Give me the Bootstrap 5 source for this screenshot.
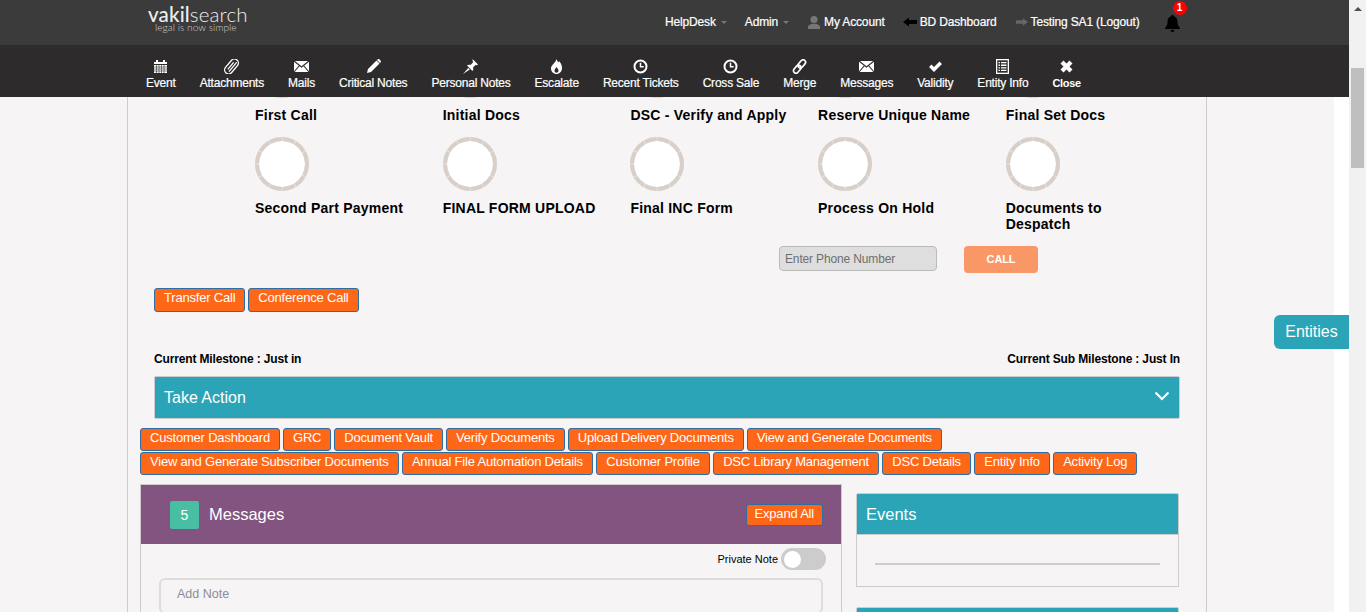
<!DOCTYPE html>
<html lang="en">
<head>
    <meta charset="UTF-8">
    <meta name="viewport" content="width=device-width, initial-scale=1.0">
    <title>Vakilsearch Ticket</title>
    <link href="https://cdn.jsdelivr.net/npm/bootstrap@5.3.0/dist/css/bootstrap.min.css" rel="stylesheet">
    <style>
        html, body { height: 612px; overflow: hidden; }
        body { font-family: "Liberation Sans", Arial, sans-serif; background: #fff; color: #000; font-size: 12px; }
        .screen { height: 612px; }
        .page { width: 1349px; height: 612px; overflow: hidden; position: relative; }

        /* fake browser scrollbar */
        .scroll-rail { width: 17px; background: #f1f1f1; padding-top: 7px; }
        .scroll-arrow { width: 0; height: 0; margin: 0 auto; border: 4px solid transparent; border-top: 0; border-bottom: 4px solid #505050; }
        .scroll-thumb { width: 13px; height: 100px; margin: 57px auto 0; background: #bfbfbf; }

        /* header */
        .top-head { position: relative; z-index: 5; }
        .top-bar { height: 45px; background: #3b3b3b; padding-left: 148px; color: #fff; }
        .logo-box { width: 100px; padding-top: 5px; color: #eee; line-height: 1; }
        .logo-word { font-family: Lato, sans-serif; font-size: 20.5px; font-weight: 300; letter-spacing: .15px; line-height: 18px; }
        .logo-word b { font-weight: 500; }
        .logo-tag { font-family: Lato, sans-serif; font-size: 10.2px; font-weight: 300; color: #ccc; margin-left: 7px; line-height: 9px; }
        .top-links { position: absolute; top: 0; left: 665px; height: 43px; white-space: nowrap; }
        .top-link { color: #fff; text-decoration: none; font-size: 12px; letter-spacing: -.15px; -webkit-text-stroke: .2px #fff; }
        .top-link.has-caret { margin-right: 18px; }
        .top-link.has-icon { margin-right: 18px; }
        .top-link.wide-gap { margin-right: 19px; }
        .mini-caret { display: inline-block; width: 0; height: 0; margin-left: 5px; vertical-align: middle; border: 3px solid transparent; border-top: 3px solid #777; border-bottom: 0; }
        .top-ico { width: 14px; height: 14px; margin-right: 3px; vertical-align: -3px; }
        .bell-wrap { position: relative; width: 17px; height: 17px; margin-top: 2px; }
        .bell-count { position: absolute; top: -13px; left: 9px; width: 14px; height: 14px; border-radius: 50%; background: #f00; color: #fff; font-size: 10px; font-weight: 700; line-height: 14px; text-align: center; }
        .tool-bar { height: 52px; background: #2d2b2c; padding: 14px 0 0 146px; gap: 24px; }
        .tool-item { color: #fff; text-decoration: none; font-size: 12px; line-height: 14px; letter-spacing: -.21px; text-align: center; -webkit-text-stroke: .2px #fff; white-space: nowrap; }
        .tool-item svg { display: block; width: 15px; height: 15px; margin: 0 auto 2px; }
        .tool-item.tool-small { font-size: 11px; font-weight: 700; letter-spacing: -.3px; -webkit-text-stroke: 0; }

        /* body */
        .page-body { background: #fff; padding-right: 15px; height: 515px; }
        .page-inner { background: #f6f4f5; height: 515px; padding-left: 127px; }
        .main-frame { display: flow-root; width: 1080px; height: 515px; border-left: 1px solid #ccc; border-right: 1px solid #ccc; }

        .stage-grid { display: grid; grid-template-columns: repeat(5, 187.7px); row-gap: 14px; margin: -53px 0 0 127px; }
        .stage-ring { display: block; width: 54px; height: 54px; }
        .stage-name { font-size: 14px; font-weight: 700; letter-spacing: .22px; line-height: 16px; margin-top: 9px; min-height: 16px; white-space: nowrap; }
        .stage-name.wrap-name { width: 130px; white-space: normal; }

        .call-row { padding-right: 168px; margin-top: 14px; gap: 27px; height: 27px; }
        .phone-input { width: 158px; height: 25px; min-height: 0; padding: 0 5px; font-size: 12px; letter-spacing: -.15px; background: #dedede; border: 1px solid #bbb; border-radius: 4px; }
        .phone-input::placeholder { color: #6f6f6f; }
        .call-btn { width: 74px; height: 27px; padding: 0; background: #fa9767; border: 0; border-radius: 4px; color: #fff; font-size: 11px; font-weight: 700; letter-spacing: -.1px; }
        .call-btn:hover { background: #fa9767; color: #fff; }

        .act-btn { background: #fd6717; border: 1px solid #2f6da5; border-radius: 3px; color: #fff; font-size: 13px; line-height: 15px; letter-spacing: -.2px; padding: 1px 9px 6px; white-space: nowrap; }
        .act-btn:hover { background: #fd6717; color: #fff; border-color: #2f6da5; }
        .transfer-row { padding-left: 26px; margin-top: 15px; gap: 3px; }
        .milestone-row { margin: 40px 26px 0; font-size: 12px; font-weight: 700; line-height: 14px; letter-spacing: -.15px; }
        .take-bar { margin: 10px 26px 0; height: 43px; background: #2ca4b7; border: 1px solid #ccc; border-radius: 2px; color: #fff; font-size: 16px; padding: 0 9px; }
        .take-bar svg { width: 16px; height: 10px; margin-top: -4px; }
        .act-rows { padding-left: 12px; margin-top: 9px; }
        .act-line { gap: 3px; margin-bottom: 1px; }
        .act-line + .act-line { gap: 3.3px; }
        .act-line .act-btn { padding-bottom: 5px; }

        .lower-row { padding-left: 12px; margin-top: 9px; }
        .msg-col { width: 702px; }
        .msg-head { height: 60px; background: #82547f; border: 1px solid #ccc; border-bottom: 0; color: #fff; padding: 0 18px 0 29px; font-size: 16.5px; }
        .msg-count { width: 29px; height: 28px; background: #48bfa3; border-radius: 2px; font-size: 14px; line-height: 28px; text-align: center; margin-right: 10px; }
        .expand-btn { padding: 0 8px 3px; height: 22px; }
        .msg-body { border: 1px solid #ccc; border-top: 0; padding: 4px 15px 0 18px; height: 200px; }
        .note-toggle { gap: 3px; font-size: 11px; }
        .toggle-track { width: 45px; height: 22px; background: #ccc; border-radius: 11px; padding: 3px 0 0 3px; }
        .toggle-knob { width: 17px; height: 17px; background: #fff; border-radius: 50%; }
        .note-box { height: 36px; margin: 8px 3px 0 0; border: 2px solid #ddd; border-radius: 6px; padding: 0 16px; color: #8d8d95; line-height: 29px; font-size: 12.5px; background: #f6f4f5; }
        .side-col { width: 323px; margin: 9px 0 0 14px; }
        .side-head { height: 42px; background: #2ca4b7; border: 1px solid #ccc; border-radius: 2px 2px 0 0; color: #fff; font-size: 16.5px; padding: 0 9px; }
        .side-body { height: 52px; border: 1px solid #ccc; border-top: 0; padding: 28px 18px 0; }
        .side-line { height: 2px; background: #ccc; }
        .side-next { margin-top: 20px; }

        .entities-tab { position: absolute; top: 315px; right: 0; width: 75px; height: 34px; background: #2ca4b7; border-radius: 6px 0 0 6px; color: #fff; font-size: 16px; line-height: 34px; text-align: center; z-index: 6; }
    </style>
</head>
<body>
    <div class="screen d-flex">
        <div class="page">
            <!-- Header -->
            <header class="top-head">
                <div class="top-bar d-flex">
                    <div class="logo-box">
                        <div class="logo-word"><b>vakil</b>search</div>
                        <div class="logo-tag">legal is now simple</div>
                    </div>
                    <div class="top-links d-flex align-items-center">
                        <a class="top-link has-caret" href="#">HelpDesk<span class="mini-caret"></span></a>
                        <a class="top-link has-caret" href="#">Admin<span class="mini-caret"></span></a>
                        <a class="top-link has-icon" href="#"><svg class="top-ico" viewBox="0 0 14 14"><circle cx="7" cy="4.500" r="3.600" fill="#777"/><path d="M1 14v-2c0-2 3-2.600 4-3.200h4c1 .6 4 1.200 4 3.200v2z" fill="#777"/></svg>My Account</a>
                        <a class="top-link has-icon wide-gap" href="#"><svg class="top-ico" viewBox="0 0 14 14"><path d="M0 7l6-4.500V5h8v4H6v2.500z" fill="#000"/></svg>BD Dashboard</a>
                        <a class="top-link" href="#"><svg class="top-ico" style="width:12px" viewBox="0 0 14 14"><path d="M14 7L8 2.500V5H0v4h8v2.500z" fill="#666"/></svg>Testing SA1 (Logout)</a>
                        <div class="bell-wrap ms-4">
                            <svg width="17" height="17" viewBox="0 0 17 17"><path d="M8.500 0c1 0 1.300.6 1.300 1.200C12.500 2 13.500 4 13.500 7c0 3 1 4.500 2.500 6v1H1v-1c1.500-1.500 2.500-3 2.500-6 0-3 1-5 3.700-5.800C7.200.6 7.500 0 8.500 0zM6.500 15h4c0 1-.8 2-2 2s-2-1-2-2z" fill="#000"/></svg>
                            <span class="bell-count">1</span>
                        </div>
                    </div>
                </div>
                <nav class="tool-bar d-flex">
                    <a class="tool-item" href="#"><svg viewBox="0 0 15 15"><path d="M1 3h2V1h2v2h5V1h2v2h2v2H1z" fill="#fff"/><rect x="1" y="6" width="13" height="8" fill="#fff"/><path d="M1 8h13M1 10h13M1 12h13M3.500 6v8M6 6v8M8.500 6v8M11 6v8" stroke="#2d2b2c" stroke-width=".6"/></svg>Event</a>
                    <a class="tool-item" href="#"><svg viewBox="0 0 15 15"><g transform="rotate(40 7.500 7.500)" fill="none" stroke="#fff" stroke-width="1.300"><rect x="3.500" y="-1" width="8" height="17" rx="4"/><path d="M6.500 12V3M8.800 13V1"/></g></svg>Attachments</a>
                    <a class="tool-item" href="#"><svg viewBox="0 0 15 15"><path d="M0 2h15v11H0z" fill="#fff"/><path d="M0 2l7.500 6L15 2M0 13l5.500-6.500M15 13L9.500 6.500" fill="none" stroke="#2d2b2c" stroke-width="1.100"/></svg>Mails</a>
                    <a class="tool-item" href="#"><svg viewBox="0 0 15 15"><path d="M10.500 1.500l3 3L5 13 1 14l1-4zM11.500.5c.6-.6 1.500-.5 2 0l1 1c.5.5.6 1.400 0 2l-.5.500-3-3z" fill="#fff"/></svg>Critical Notes</a>
                    <a class="tool-item" href="#"><svg viewBox="0 0 15 15"><path d="M9.500 0l5.500 5.500-1.200.8-1-.5-2.800 2.800c.6 1.400.3 2.600-.6 3.400L4 6.600c.8-.9 2-1.200 3.400-.6L10.200 3.200l-.5-1zM5.300 9l1.500 1.500L0 15z" fill="#fff"/></svg>Personal Notes</a>
                    <a class="tool-item" href="#"><svg viewBox="0 0 15 15"><path d="M7.500 0c.5 2 1.500 2.500 2 3.500.3-.5.4-1 .4-1.500C12 4 13 6 13 9c0 3.500-2.500 6-5.500 6S2 12.500 2 9.500C2 6 6.500 4 7.500 0zM7.500 8C6.500 9.500 5.500 10.300 5.500 11.800c0 1.200 1 2 2 2s2-.8 2-2C9.500 10.300 8.500 9.500 7.500 8z" fill="#fff"/></svg>Escalate</a>
                    <a class="tool-item" href="#"><svg viewBox="0 0 15 15"><circle cx="7.500" cy="7.500" r="6" fill="none" stroke="#fff" stroke-width="2"/><path d="M7.500 3.800v4h3.200" fill="none" stroke="#fff" stroke-width="1.500"/></svg>Recent Tickets</a>
                    <a class="tool-item" href="#"><svg viewBox="0 0 15 15"><circle cx="7.500" cy="7.500" r="6" fill="none" stroke="#fff" stroke-width="2"/><path d="M7.500 3.800v4h3.200" fill="none" stroke="#fff" stroke-width="1.500"/></svg>Cross Sale</a>
                    <a class="tool-item" href="#"><svg viewBox="0 0 15 15"><g transform="rotate(40 7.500 7.500)" fill="none" stroke="#fff" stroke-width="1.700"><rect x="5" y="-.5" width="5" height="9" rx="2.500"/><rect x="5" y="6.500" width="5" height="9" rx="2.500"/></g></svg>Merge</a>
                    <a class="tool-item" href="#"><svg viewBox="0 0 15 15"><path d="M0 2h15v11H0z" fill="#fff"/><path d="M0 2l7.500 6L15 2M0 13l5.500-6.500M15 13L9.500 6.500" fill="none" stroke="#2d2b2c" stroke-width="1.100"/></svg>Messages</a>
                    <a class="tool-item" href="#"><svg viewBox="0 0 15 15"><path d="M1 8l2.500-2.500L6 8l5.500-5.500L14 5l-8 8z" fill="#fff"/></svg>Validity</a>
                    <a class="tool-item" href="#"><svg viewBox="0 0 15 15"><path d="M1 0h13v15H1z" fill="#fff"/><path d="M2.300 1.300h10.400v12.400H2.300z" fill="#2d2b2c"/><path d="M3.500 3h1.500v1.300H3.500zM6 3h5.500v1.300H6zM3.500 5.600h1.500v1.300H3.500zM6 5.600h5.500v1.300H6zM3.500 8.200h1.500v1.300H3.500zM6 8.200h5.500v1.300H6zM3.500 10.800h1.500v1.300H3.500zM6 10.800h5.500v1.300H6z" fill="#fff"/></svg>Entity Info</a>
                    <a class="tool-item tool-small" href="#"><svg viewBox="0 0 15 15"><path d="M1.500 4.500l3-3L7.500 4.500l3-3 3 3-3 3 3 3-3 3-3-3-3 3-3-3 3-3z" fill="#fff"/></svg>Close</a>
                </nav>
            </header>

            <div class="page-body">
                <div class="page-inner">
                    <div class="main-frame">
                        <!-- Milestone circles -->
                        <div class="stage-grid" id="stageGrid"></div>

                        <div class="call-row d-flex justify-content-end align-items-start">
                            <input type="text" class="form-control phone-input" placeholder="Enter Phone Number">
                            <button class="btn call-btn">CALL</button>
                        </div>

                        <div class="transfer-row d-flex">
                            <button class="btn act-btn">Transfer Call</button>
                            <button class="btn act-btn">Conference Call</button>
                        </div>

                        <div class="milestone-row d-flex justify-content-between">
                            <span>Current Milestone : Just in</span>
                            <span>Current Sub Milestone : Just In</span>
                        </div>

                        <div class="take-bar d-flex justify-content-between align-items-center">
                            <span>Take Action</span>
                            <svg viewBox="0 0 16 10"><path d="M1.500 1.500L8 8l6.500-6.500" fill="none" stroke="#fff" stroke-width="2"/></svg>
                        </div>

                        <div class="act-rows">
                            <div class="act-line d-flex">
                                <button class="btn act-btn">Customer Dashboard</button>
                                <button class="btn act-btn">GRC</button>
                                <button class="btn act-btn">Document Vault</button>
                                <button class="btn act-btn">Verify Documents</button>
                                <button class="btn act-btn">Upload Delivery Documents</button>
                                <button class="btn act-btn">View and Generate Documents</button>
                            </div>
                            <div class="act-line d-flex">
                                <button class="btn act-btn">View and Generate Subscriber Documents</button>
                                <button class="btn act-btn">Annual File Automation Details</button>
                                <button class="btn act-btn">Customer Profile</button>
                                <button class="btn act-btn">DSC Library Management</button>
                                <button class="btn act-btn">DSC Details</button>
                                <button class="btn act-btn">Entity Info</button>
                                <button class="btn act-btn">Activity Log</button>
                            </div>
                        </div>

                        <div class="lower-row d-flex align-items-start">
                            <!-- Messages -->
                            <div class="msg-col">
                                <div class="msg-head d-flex align-items-center">
                                    <span class="msg-count">5</span>
                                    <span>Messages</span>
                                    <button class="btn act-btn expand-btn ms-auto">Expand All</button>
                                </div>
                                <div class="msg-body">
                                    <div class="note-toggle d-flex justify-content-end align-items-center">
                                        <span>Private Note</span>
                                        <div class="toggle-track"><div class="toggle-knob"></div></div>
                                    </div>
                                    <div class="note-box">Add Note</div>
                                </div>
                            </div>
                            <!-- Events -->
                            <div class="side-col">
                                <div class="side-head d-flex align-items-center">Events</div>
                                <div class="side-body"><div class="side-line"></div></div>
                                <div class="side-head side-next"></div>
                            </div>
                        </div>
                    </div>
                </div>
            </div>
            <div class="entities-tab">Entities</div>
        </div>
        <div class="scroll-rail">
            <div class="scroll-arrow"></div>
            <div class="scroll-thumb"></div>
        </div>
    </div>

    <script>
        const stages = ['First Call', 'Initial Docs', 'DSC - Verify and Apply', 'Reserve Unique Name', 'Final Set Docs',
            'Second Part Payment', 'FINAL FORM UPLOAD', 'Final INC Form', 'Process On Hold', 'Documents to Despatch'];
        const grid = document.getElementById('stageGrid');
        stages.forEach(name => {
            const cell = document.createElement('div');
            const wrap = name === 'Documents to Despatch' ? ' wrap-name' : '';
            cell.innerHTML = `<svg class="stage-ring" viewBox="0 0 54 54"><circle cx="27" cy="27" r="25" fill="#fff" stroke="#e6e0dc" stroke-width="4"/><circle cx="27" cy="27" r="25" fill="none" stroke="#d8cfc9" stroke-width="4" stroke-dasharray="12 1.090"/></svg><div class="stage-name${wrap}">${name}</div>`;
            grid.appendChild(cell);
        });
    </script>
    <script src="https://cdn.jsdelivr.net/npm/bootstrap@5.3.0/dist/js/bootstrap.bundle.min.js"></script>
</body>
</html>
